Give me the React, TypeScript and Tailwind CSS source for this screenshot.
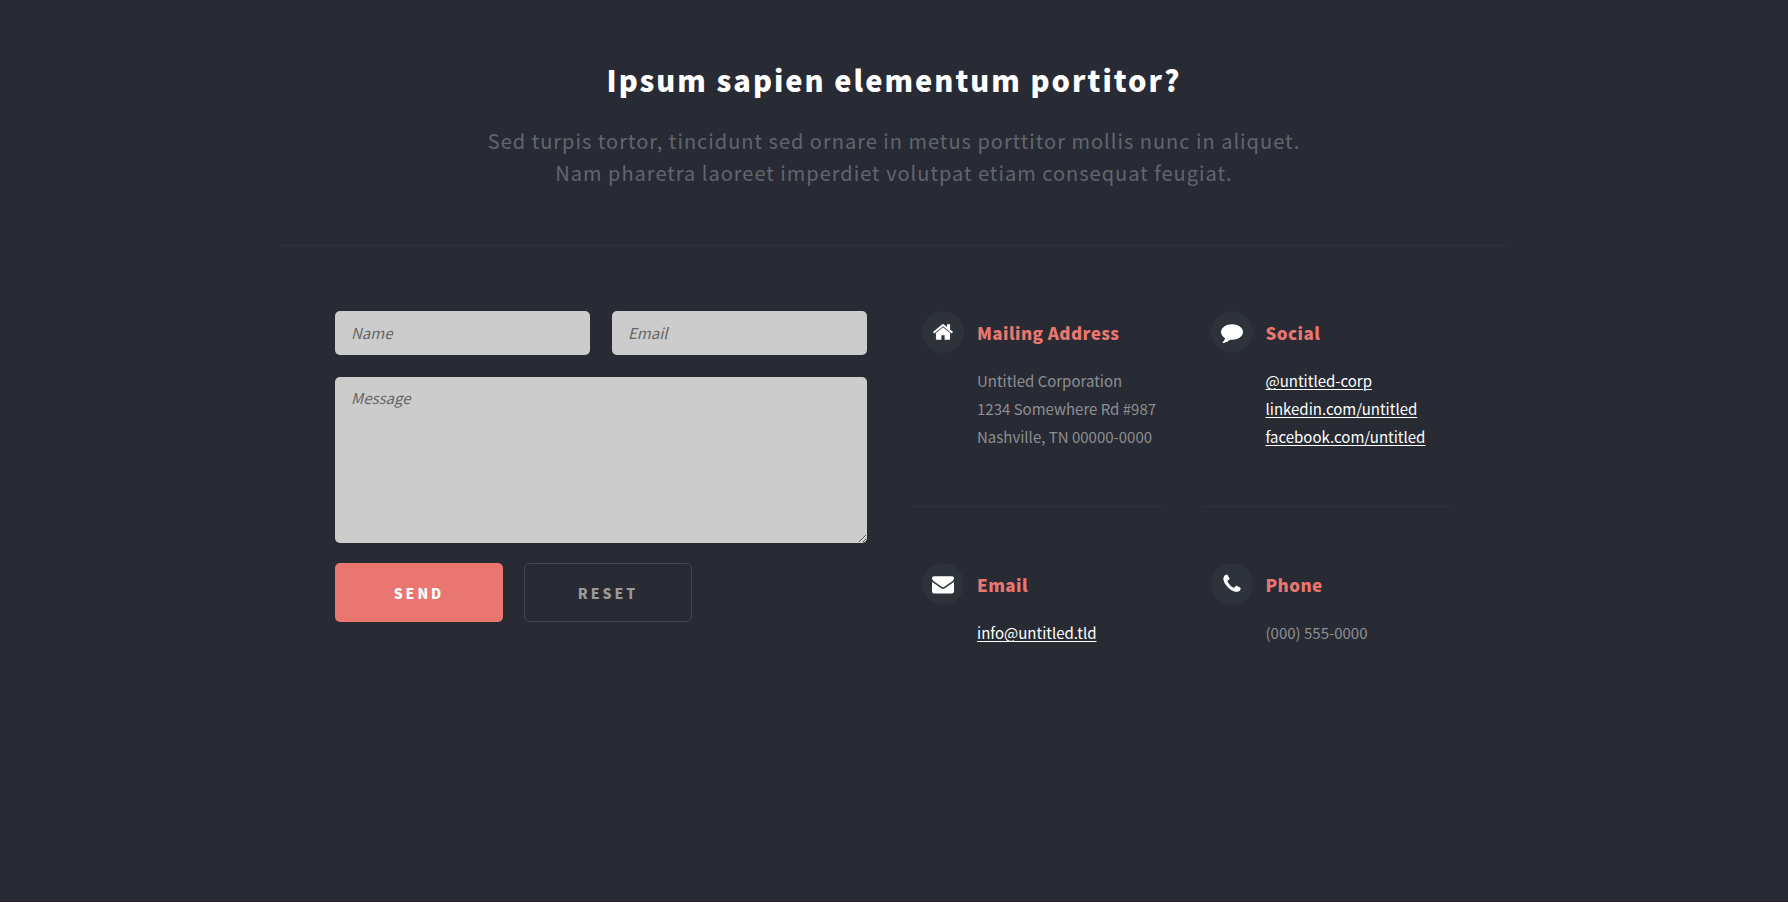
import type { ReactNode } from "react";

const icons = {
  home: "M1472 992v480q0 26-19 45t-45 19h-384v-384h-256v384h-384q-26 0-45-19t-19-45v-480q0-1 .5-3t.5-3l575-474 575 474q1 2 1 6zm223-69l-62 74q-8 9-21 11h-3q-13 0-21-7l-692-577-692 577q-12 8-24 7-13-2-21-11l-62-74q-8-10-7-23.5t11-21.5l719-599q32-26 76-26t76 26l244 204v-195q0-14 9-23t23-9h192q14 0 23 9t9 23v408l219 182q10 8 11 21.5t-7 23.5z",
  comment: "M1792 896q0 174-120 321.5t-326 233-450 85.5q-70 0-145-8-198 175-460 242-49 14-114 22-17 2-30.5-9t-17.5-29v-1q-3-4-.5-12t2-10 4.5-9.5l6-9 7-8.5 8-9q7-8 31-34.5t34.5-38 31-39.5 32.5-51 27-59 26-76q-157-89-247.5-220t-90.5-281q0-130 71-248.5t191-204.5 286-136.5 348-50.5q244 0 450 85.5t326 233 120 321.5z",
  envelope: "M1792 710v794q0 66-47 113t-113 47h-1472q-66 0-113-47t-47-113v-794q44 49 101 87 362 246 497 345 57 42 92.5 65.5t94.5 48 110 24.5h2q51 0 110-24.5t94.5-48 92.5-65.5q170-123 498-345 57-39 100-87zm0-294q0 79-49 151t-122 123q-376 261-468 325-10 7-42.5 31t-54 38.5-52 32.5-57.5 27-50 9h-2q-23 0-50-9t-57.5-27-52-32.5-54-38.5-42.5-31q-91-64-262-182.5t-205-142.5q-62-42-117-115.5t-55-136.5q0-78 41.5-130t118.5-52h1472q65 0 112.5 47t47.5 113z",
  phone: "M1600 1240q0 27-10 70.5t-21 68.5q-21 50-122 106-94 51-186 51-27 0-53-3.5t-57.5-12.5-47-14.5-55.5-20.5-49-18q-98-35-175-83-127-79-264-216t-216-264q-48-77-83-175-3-9-18-49t-20.5-55.5-14.5-47-12.5-57.5-3.5-53q0-92 51-186 56-101 106-122 25-11 68.5-21t70.5-10q14 0 21 3 18 6 53 76 11 19 30 54t35 63.5 31 53.5q3 4 17.5 25t21.5 35.5 7 28.5q0 20-28.5 50t-62 55-62 53-28.5 46q0 9 5 22.5t8.5 20.5 14 24 11.5 19q76 137 174 235t235 174q2 1 19 11.5t24 14 20.5 8.5 22.5 5q18 0 46-28.5t53-62 55-62 50-28.5q14 0 28.5 7t35.5 21.5 25 17.5q25 15 53.5 31t63.5 35 54 30q70 35 76 53 3 7 3 21z",
};

function Contact({ icon, title, children }: { icon: keyof typeof icons; title: string; children: ReactNode }) {
  return (
    <section className="flex gap-[13px] px-2.5">
      <span className="flex size-[42px] shrink-0 items-center justify-center rounded-full bg-[#2e323b] text-white">
        <svg viewBox="0 0 1792 1792" className="size-[22px] overflow-visible" fill="currentColor" aria-hidden="true">
          <path d={icons[icon]} />
        </svg>
      </span>
      <div className="min-w-0">
        <h3 className="text-[17px] leading-[44px] font-black tracking-wide whitespace-nowrap text-[#e97770]">{title}</h3>
        <div className="mt-3 flex flex-col items-start text-[15px] leading-7 whitespace-nowrap text-[#8d8f93]">{children}</div>
      </div>
    </section>
  );
}

function ContactLink({ href, children }: { href: string; children: string }) {
  return (
    <a href={href} className="text-white underline decoration-1 underline-offset-2">
      {children}
    </a>
  );
}

const field =
  "block w-full rounded-[5px] bg-[#cccccc] px-4 text-[15px] leading-6 text-[#333333] italic placeholder:text-[#666666] outline-none";
const button = "h-[59px] w-[168px] rounded-[5px] pt-0.5 text-[14px] font-black tracking-[3px]";

export default function App() {
  return (
    <main className="min-h-screen border-b border-[#221f28] bg-[#282b34] px-6 pt-[55px] pb-16 font-['Noto_Sans_CJK_SC','Noto_Sans',sans-serif]">
      <div className="mx-auto max-w-[1228px]">
        <header className="border-b border-[#2e323b] pb-14 text-center">
          <h2 className="text-[29px] leading-[48px] font-black tracking-[2px] text-white">
            Ipsum sapien elementum portitor?
          </h2>
          <p className="mt-[22px] text-[20px] leading-8 tracking-[1px] text-[#62656f]">
            Sed turpis tortor, tincidunt sed ornare in metus porttitor mollis nunc in aliquet.
            <br />
            Nam pharetra laoreet imperdiet volutpat etiam consequat feugiat.
          </p>
        </header>

        <div className="grid gap-[45px] pt-[65px] lg:grid-cols-[532fr_541fr] lg:px-[55px]">
          <form onSubmit={(e) => e.preventDefault()}>
            <div className="grid grid-cols-2 gap-[22px]">
              <input type="text" name="name" aria-label="Name" placeholder="Name" className={`h-11 pb-0.5 ${field}`} />
              <input type="email" name="email" aria-label="Email" placeholder="Email" className={`h-11 pb-0.5 ${field}`} />
            </div>
            <textarea name="message" aria-label="Message" placeholder="Message" className={`mt-[22px] h-[166px] resize py-[9px] ${field}`} />
            <div className="mt-5 flex gap-[21px]">
              <button type="submit" className={`bg-[#e97770] text-white ${button}`}>
                SEND
              </button>
              <button type="reset" className={`border border-[#41444c] text-[#9a9a98] ${button}`}>
                RESET
              </button>
            </div>
          </form>

          <div className="grid grid-cols-2 content-start gap-x-9">
            <div className="border-b border-[#2e323b] pb-[55px]">
              <Contact icon="home" title="Mailing Address">
                <span>Untitled Corporation</span>
                <span>1234 Somewhere Rd #987</span>
                <span>Nashville, TN 00000-0000</span>
              </Contact>
            </div>
            <div className="border-b border-[#2e323b] pb-[55px]">
              <Contact icon="comment" title="Social">
                <ContactLink href="#twitter">@untitled-corp</ContactLink>
                <ContactLink href="#linkedin">linkedin.com/untitled</ContactLink>
                <ContactLink href="#facebook">facebook.com/untitled</ContactLink>
              </Contact>
            </div>
            <div className="pt-14">
              <Contact icon="envelope" title="Email">
                <ContactLink href="#email">info@untitled.tld</ContactLink>
              </Contact>
            </div>
            <div className="pt-14">
              <Contact icon="phone" title="Phone">
                <span>(000) 555-0000</span>
              </Contact>
            </div>
          </div>
        </div>
      </div>
    </main>
  );
}
